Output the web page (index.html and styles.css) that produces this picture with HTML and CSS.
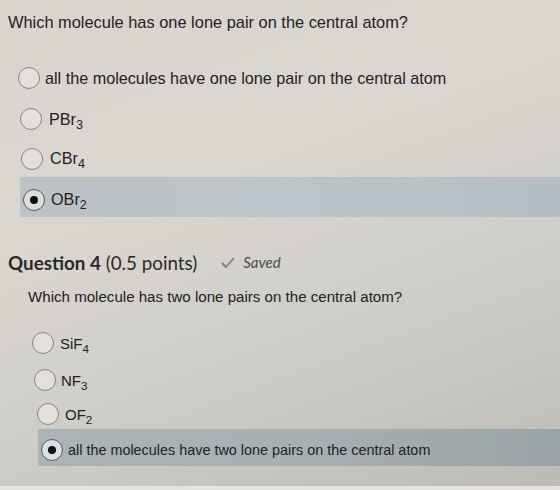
FILE: index.html
```html
<!DOCTYPE html>
<html>
<head>
<meta charset="utf-8">
<link rel="stylesheet" href="styles.css">
</head>
<body>
<div class="page">
  <p class="prompt prompt-1">Which molecule has one lone pair on the central atom?</p>
  <div class="options options-1">
    <div class="opt o1"><span class="radio"></span><span class="label">all the molecules have one lone pair on the central atom</span></div>
    <div class="opt o2"><span class="radio"></span><span class="label">PBr<sub>3</sub></span></div>
    <div class="opt o3"><span class="radio"></span><span class="label">CBr<sub>4</sub></span></div>
    <div class="opt o4 selected"><span class="radio checked"></span><span class="label">OBr<sub>2</sub></span></div>
  </div>

  <div class="q-head">
    <span class="q-title"><b>Question 4</b> (0.5 points)</span>
    <span class="saved">
      <svg class="check" width="14" height="12" viewBox="0 0 14 12"><path d="M1.5 6.5 L5 10 L12.5 1.5" fill="none" stroke="#7d7d7d" stroke-width="1.8" stroke-linecap="round" stroke-linejoin="round"/></svg>
      <i>Saved</i>
    </span>
  </div>
  <p class="prompt prompt-2">Which molecule has two lone pairs on the central atom?</p>
  <div class="options options-2">
    <div class="opt p1"><span class="radio"></span><span class="label">SiF<sub>4</sub></span></div>
    <div class="opt p2"><span class="radio"></span><span class="label">NF<sub>3</sub></span></div>
    <div class="opt p3"><span class="radio"></span><span class="label">OF<sub>2</sub></span></div>
    <div class="opt p4 selected"><span class="radio checked"></span><span class="label">all the molecules have two lone pairs on the central atom</span></div>
  </div>
  <div class="bottom-strip"></div>
</div>
</body>
</html>
```
FILE: styles.css
```css
html, body {
  margin: 0;
  padding: 0;
}
body {
  width: 560px;
  height: 490px;
  overflow: hidden;
  font-family: "Liberation Sans", Arial, sans-serif;
  color: #222;
  background: linear-gradient(160deg, #d9d5ce 0%, #dad7d0 35%, #cfcdc8 65%, #bdbbb4 100%);
}
.page {
  height: 490px;
  display: flex;
  flex-direction: column;
}
.prompt {
  margin: 0;
  line-height: 20px;
}
.prompt-1 {
  padding: 12px 0 0 8px;
  font-size: 16.4px;
}
.options {
  display: flex;
  flex-direction: column;
}
.options-1 {
  margin-top: 26px;
}
.opt {
  display: flex;
  align-items: center;
  gap: 5px;
}
.radio {
  flex: none;
  width: 20px;
  height: 20px;
  border: 1.2px solid #858585;
  border-radius: 50%;
  background: #e3e0da;
  display: flex;
  align-items: center;
  justify-content: center;
}
.radio.checked {
  border: 1.6px solid #5a5a5a;
  background: #dcdfdf;
}
.radio.checked::after {
  content: "";
  width: 8px;
  height: 8px;
  border-radius: 50%;
  background: #111;
}
.label sub {
  font-size: 0.78em;
  vertical-align: -0.35em;
  line-height: 0;
}
.options-1 .label {
  font-size: 16.2px;
}
.o1 { height: 40px; padding-left: 18px; gap: 5px; }
.o2 { height: 42px; padding-left: 20px; gap: 7px; }
.o3 { height: 37px; padding-left: 21px; gap: 7px; }
.o4 {
  height: 40px;
  margin-left: 20px;
  padding: 5px 0 0 3px;
  box-sizing: border-box;
  gap: 6px;
  background: linear-gradient(90deg, #bcc2c5 0%, #bbc4c8 50%, #b4bfc5 100%);
}
.q-head {
  margin-top: 33px;
  padding-left: 8px;
  height: 24px;
  display: flex;
  align-items: center;
  font-family: Lato, "Liberation Sans", sans-serif;
}
.q-title {
  font-size: 18.8px;
  color: #2a2a2a;
}
.q-title b {
  font-weight: 700;
}
.saved {
  margin-left: 24px;
  display: flex;
  align-items: center;
  gap: 8px;
  font-size: 15px;
  color: #4a4a4a;
}
.check {
  margin-top: 2px;
}
.prompt-2 {
  margin-top: 13px;
  padding-left: 28px;
  font-size: 15.1px;
}
.options-2 {
  margin-top: 18px;
}
.options-2 .label {
  font-size: 15px;
}
.p1 { height: 36px; padding-left: 32px; gap: 6px; }
.p2 { height: 38px; padding-left: 34px; gap: 5px; }
.p3 { height: 30px; padding-left: 37px; gap: 6px; }
.p4 {
  height: 37px;
  margin-left: 38px;
  padding: 4px 0 0 3px;
  box-sizing: border-box;
  gap: 5px;
  background: linear-gradient(90deg, #aab4b6 0%, #a7b1b4 50%, #9aa3a5 100%);
}
.options-2 .p4 .label {
  font-size: 14.4px;
}
.bottom-strip {
  margin-top: auto;
  height: 4px;
  background: #e6e4df;
}
```
